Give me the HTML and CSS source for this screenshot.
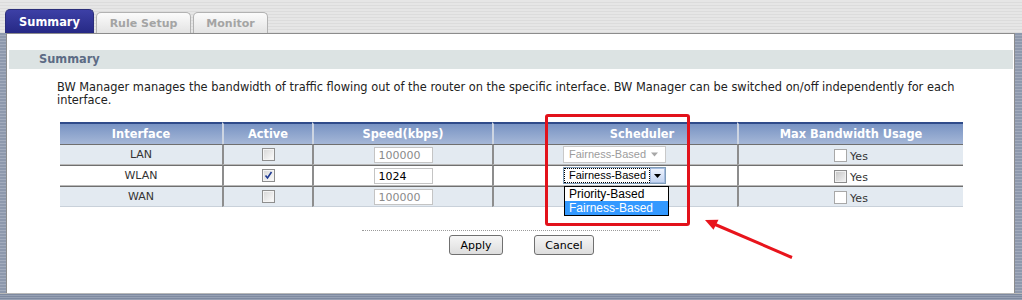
FILE: index.html
```html
<!DOCTYPE html>
<html lang="en">
<head>
    <meta charset="UTF-8">
    <title>BW Manager - Summary</title>
    <link rel="stylesheet" href="styles.css">
</head>
<body>
    <div class="page">
        <div class="tabbar">
            <div class="tab tab-summary active">Summary</div>
            <div class="tab tab-rules">Rule Setup</div>
            <div class="tab tab-monitor">Monitor</div>
        </div>
        <div class="frame">
            <div class="side side-left"></div>
            <div class="panel">
                <div class="section-title">Summary</div>
                <div class="content">
                    <p class="desc">BW Manager manages the bandwidth of traffic flowing out of the router on the specific interface. BW Manager can be switched on/off independently for each interface.</p>
                    <table class="grid">
                        <thead>
                            <tr>
                                <th class="c-if">Interface</th>
                                <th class="c-active">Active</th>
                                <th class="c-speed">Speed(kbps)</th>
                                <th class="c-blank"></th>
                                <th class="c-sched">Scheduler</th>
                                <th class="c-max">Max Bandwidth Usage</th>
                            </tr>
                        </thead>
                        <tbody>
                            <tr class="odd">
                                <td>LAN</td>
                                <td><span class="chk"></span></td>
                                <td><span class="field disabled">100000</span></td>
                                <td></td>
                                <td class="sched-cell">
                                    <span class="select disabled">Fairness-Based<span class="caret"><svg width="9" height="5" viewBox="0 0 9 5"><path d="M1 0.5h7L4.5 4.5z" fill="#a8a8a8"/></svg></span></span>
                                </td>
                                <td><span class="yes"><span class="box"></span>Yes</span></td>
                            </tr>
                            <tr>
                                <td>WLAN</td>
                                <td><span class="chk checked"><svg width="9" height="9" viewBox="0 0 9 9"><path d="M1.5 4.5l2 2.5L7.5 1" fill="none" stroke="#1f3a93" stroke-width="1.6"/></svg></span></td>
                                <td><span class="field">1024</span></td>
                                <td></td>
                                <td class="sched-cell">
                                    <span class="select open">
                                        <span class="focus-text">Fairness-Based</span>
                                        <span class="drop-btn"><svg width="7" height="4" viewBox="0 0 7 4"><path d="M0 0h7L3.5 4z" fill="#000"/></svg></span>
                                        <span class="dropdown">
                                            <span class="option">Priority-Based</span>
                                            <span class="option selected">Fairness-Based</span>
                                        </span>
                                    </span>
                                </td>
                                <td><span class="yes"><span class="box grey"></span>Yes</span></td>
                            </tr>
                            <tr class="odd">
                                <td>WAN</td>
                                <td><span class="chk"></span></td>
                                <td><span class="field disabled">100000</span></td>
                                <td></td>
                                <td class="sched-cell"></td>
                                <td><span class="yes"><span class="box"></span>Yes</span></td>
                            </tr>
                        </tbody>
                    </table>
                    <div class="divider"></div>
                    <div class="buttons">
                        <button type="button" class="btn btn-apply">Apply</button>
                        <button type="button" class="btn btn-cancel">Cancel</button>
                    </div>
                </div>
            </div>
            <div class="side side-right"></div>
        </div>
        <div class="bottom"></div>

        <!-- annotation overlay -->
        <div class="highlight"></div>
        <svg class="arrow" width="100" height="50" viewBox="0 0 100 50">
            <line x1="92" y1="45.5" x2="14" y2="12" stroke="#e8141c" stroke-width="3"/>
            <polygon points="5,8 18.5,7.8 13.5,17.8" fill="#e8141c"/>
        </svg>
    </div>
</body>
</html>
```

FILE: styles.css
```css
body {
    margin: 0;
    padding: 0;
    font-family: "DejaVu Sans", Verdana, sans-serif;
    font-size: 11px;
    color: #222;
    background: #e2e2e2;
}

.page {
    position: relative;
    width: 1022px;
    height: 300px;
    overflow: hidden;
    display: flex;
    flex-direction: column;
}

/* tabs */
.tabbar {
    height: 33px;
    display: flex;
    align-items: flex-end;
    gap: 2px;
    padding-left: 5px;
    box-sizing: border-box;
    background: repeating-linear-gradient(#e6e6e6 0, #e6e6e6 2px, #dcdcdc 2px, #dcdcdc 3px);
}

.tab {
    height: 21px;
    line-height: 21px;
    box-sizing: border-box;
    text-align: center;
    font-weight: bold;
    color: #a4a4a4;
    background: linear-gradient(#fbfbfb, #e3e3e3);
    border: 1px solid #b2b2b2;
    border-bottom: none;
    border-radius: 5px 5px 0 0;
}

.tab-summary {
    width: 89px;
    height: 24px;
    line-height: 24px;
    font-size: 11.4px;
    color: #fff;
    background: linear-gradient(#3d40a6, #262985);
    border-color: #2a2d7a;
}

.tab-rules {
    width: 95px;
}

.tab-monitor {
    width: 75px;
}

/* frame */
.frame {
    flex: 1;
    display: flex;
}

.side {
    background: repeating-linear-gradient(#8e99ad 0, #8e99ad 2px, #a3acbd 2px, #a3acbd 3px);
}

.side-left {
    width: 6px;
}

.side-right {
    width: 7px;
}

.bottom {
    height: 6px;
    border-top: 1px solid #b8b8b8;
    background: repeating-linear-gradient(#7e8aa0 0, #7e8aa0 1px, #97a1b4 1px, #97a1b4 2px);
}

.panel {
    flex: 1;
    background: #fff;
    border: 1px solid #8c8c8c;
    border-bottom: none;
    padding-top: 16px;
}

.section-title {
    margin: 0 1px 0 2px;
    height: 19px;
    line-height: 19px;
    padding-left: 30px;
    background: #dce3e3;
    color: #5c6b85;
    font-size: 11.4px;
    font-weight: bold;
}

.content {
    padding-left: 50px;
}

.desc {
    width: 906px;
    margin: 12px 0 15px 0;
    font-size: 11.4px;
    line-height: 13px;
    color: #222;
}

/* table */
.grid {
    margin-left: 3px;
    width: 903px;
    border-collapse: separate;
    border-spacing: 0;
    table-layout: fixed;
}

.grid th {
    height: 20px;
    padding: 0;
    border-top: 2px solid #2f4b8a;
    border-left: 2px solid #cdd5e2;
    background: linear-gradient(#7893c3, #a5b7d7);
    color: #fff;
    font-size: 11.4px;
    font-weight: bold;
    text-align: center;
}

.grid th:first-child,
.grid td:first-child {
    border-left: none;
}

.c-if { width: 162px; }
.c-active { width: 88px; }
.c-speed { width: 178px; }
.c-blank { width: 51px; }
.c-sched { width: 190px; }
.c-max { width: 224px; }

.grid td {
    height: 19px;
    padding: 0;
    border-top: 1px solid #6f6f6f;
    border-bottom: 1px solid #b9b9b9;
    border-left: 2px solid #8d8d8d;
    text-align: center;
    color: #333;
    background: #fff;
}

.grid tr.odd td {
    background: #e3eaf1;
}

.grid tbody tr:last-child td {
    border-bottom-color: #c9d1da;
}

.chk {
    display: inline-block;
    width: 13px;
    height: 13px;
    box-sizing: border-box;
    vertical-align: middle;
    border: 1px solid #8e8e8e;
    background: linear-gradient(135deg, #d6d6d6, #fdfdfd);
    box-shadow: inset 0 0 0 1px #f4f4f4;
}

.chk.checked {
    position: relative;
}

.chk.checked svg {
    position: absolute;
    left: 1px;
    top: 1px;
}

.field {
    display: inline-block;
    width: 59px;
    height: 16px;
    line-height: 15px;
    box-sizing: border-box;
    padding-left: 4px;
    vertical-align: middle;
    text-align: left;
    border: 1px solid #c4c4c4;
    background: #fff;
    color: #000;
}

.field.disabled {
    color: #8a8a8a;
}

.sched-cell {
    text-align: left !important;
}

.select {
    position: relative;
    display: inline-block;
    width: 103px;
    height: 17px;
    margin-left: 16px;
    box-sizing: border-box;
    vertical-align: middle;
    font-family: "Liberation Sans", Arial, sans-serif;
    font-size: 11px;
    line-height: 15px;
    background: #fff;
}

.select.disabled {
    border: 1px solid #c9c9c9;
    padding-left: 5px;
    color: #9c9c9c;
}

.select.disabled .caret {
    position: absolute;
    right: 6px;
    top: 5px;
    line-height: 0;
}

.select.open {
    border: 1px solid #7f9db9;
}

.focus-text {
    position: absolute;
    left: 0;
    top: 0;
    width: 86px;
    height: 15px;
    box-sizing: border-box;
    padding-left: 5px;
    outline: 1px dotted #000;
    outline-offset: -1px;
    color: #000;
}

.drop-btn {
    position: absolute;
    right: 0;
    top: 0;
    width: 15px;
    height: 15px;
    box-sizing: border-box;
    border: 1px solid #a6bce0;
    background: linear-gradient(#eef3fd, #c4d5f2);
    display: flex;
    align-items: center;
    justify-content: center;
}

.dropdown {
    position: absolute;
    left: 0;
    top: 18px;
    width: 105px;
    box-sizing: border-box;
    border: 1px solid #000;
    background: #fff;
    z-index: 2;
}

.option {
    display: block;
    height: 14px;
    line-height: 14px;
    padding-left: 4px;
    color: #000;
    font-size: 12px;
}

.option.selected {
    background: #3399ff;
    color: #fff;
}

.yes {
    display: inline-block;
    padding-top: 3px;
}

.box {
    display: inline-block;
    width: 13px;
    height: 13px;
    box-sizing: border-box;
    margin-right: 3px;
    vertical-align: -2px;
    border: 1px solid #a8a8a8;
    background: #fff;
}

.box.grey {
    border-color: #8c8c8c;
    background: linear-gradient(135deg, #c4c4c4, #f4f4f4);
    box-shadow: inset 0 0 0 1px #f0f0f0;
}

/* actions */
.divider {
    width: 298px;
    margin: 23px 0 0 305px;
    border-top: 1px dotted #9a9a9a;
}

.buttons {
    display: flex;
    gap: 31px;
    margin: 4px 0 0 392px;
}

.btn {
    height: 20px;
    padding: 0;
    font-family: "DejaVu Sans", Verdana, sans-serif;
    font-size: 11px;
    color: #000;
    border: 1px solid #707070;
    border-radius: 3px;
    background: linear-gradient(#f6f6f6, #dddddd);
}

.btn-apply {
    width: 54px;
}

.btn-cancel {
    width: 60px;
}

/* annotation */
.highlight {
    position: absolute;
    left: 545px;
    top: 114px;
    width: 145px;
    height: 112px;
    box-sizing: border-box;
    border: 3px solid #e2121b;
    border-radius: 3px;
}

.arrow {
    position: absolute;
    left: 700px;
    top: 212px;
}
```
